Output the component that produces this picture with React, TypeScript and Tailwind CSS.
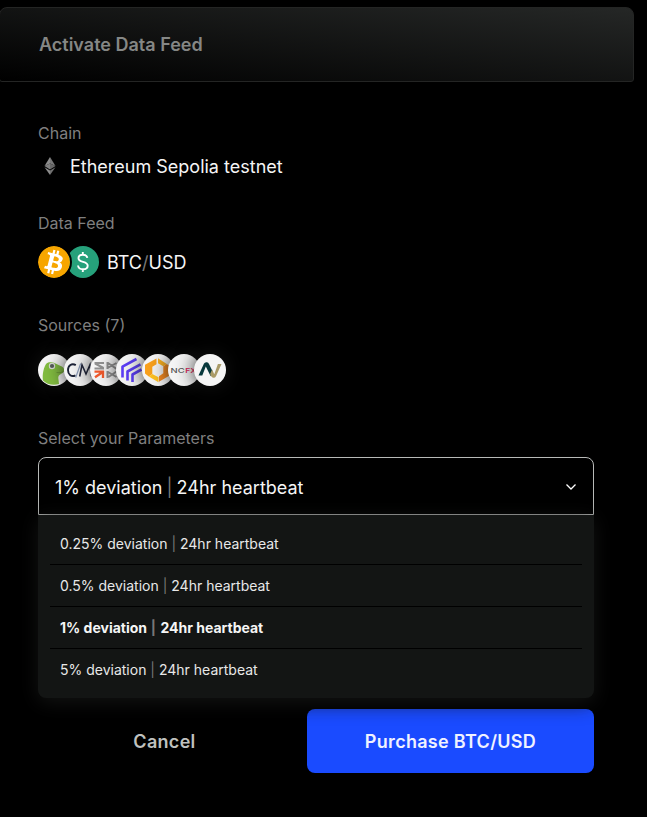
import React from "react";

const options = [
  { deviation: "0.25%", heartbeat: "24hr", selected: false },
  { deviation: "0.5%", heartbeat: "24hr", selected: false },
  { deviation: "1%", heartbeat: "24hr", selected: true },
  { deviation: "5%", heartbeat: "24hr", selected: false },
];

function Ethereum() {
  return (
    <svg className="size-6" viewBox="0 0 24 24">
      <path d="M12 3 6.5 12.1 12 9.6z" fill="#8c8c8c" />
      <path d="M12 3v6.600l5.500 2.500z" fill="#777" />
      <path d="M12 9.600 6.500 12.100 12 15.400z" fill="#808080" />
      <path d="M12 9.600v5.800l5.500-3.300z" fill="#686868" />
      <path d="M6.500 13.200 12 16.500V21z" fill="#8c8c8c" />
      <path d="M12 16.500v4.500l5.500-7.800z" fill="#707070" />
    </svg>
  );
}

function Bitcoin() {
  return (
    <svg className="relative size-8 shrink-0 rounded-full ring-2 ring-black" viewBox="0 0 32 32">
      <circle cx="16" cy="16" r="16" fill="#f7a600" />
      <path
        fill="#fff"
        transform="translate(16 16) scale(1.24) translate(-16.1 -15.9)"
        d="M23.2 14c.3-2.1-1.3-3.3-3.5-4l.7-2.900-1.700-.4-.7 2.800-1.400-.3.7-2.800-1.700-.4-.7 2.800-3.500-.9-.5 1.800s1.300.3 1.200.3c.7.2.8.6.8 1l-2 7.900c-.1.2-.3.5-.8.4l-1.200-.3-.9 2 3.300.8-.7 2.900 1.700.4.7-2.900 1.400.4-.7 2.800 1.700.4.7-2.900c3 .6 5.200.3 6.200-2.400.7-2.100 0-3.400-1.600-4.200 1.200-.3 2-1 2.200-2.600zm-3.900 5.500c-.5 2.100-4.200 1-5.300.7l.9-3.800c1.200.3 5 .9 4.400 3.100zm.6-5.500c-.5 2-3.500 1-4.500.7l.9-3.500c1 .3 4.100.7 3.600 2.800z"
      />
    </svg>
  );
}

function Dollar() {
  return (
    <svg className="-ml-[3px] size-8 shrink-0" viewBox="0 0 32 32">
      <circle cx="16" cy="16" r="16" fill="#26a17b" />
      <path
        d="M20.300 11.900c-.4-2-2.100-3.100-4.500-3.100-2.600 0-4.300 1.300-4.300 3.400 0 5 9.200 2.500 9.200 7.500 0 2.200-1.900 3.500-4.700 3.500-2.900 0-4.700-1.400-5-3.700M15.800 6v3M15.800 23v3"
        fill="none"
        stroke="#fff"
        strokeWidth="1.900"
      />
    </svg>
  );
}

function Gecko() {
  return (
    <svg className="size-8" viewBox="0 0 32 32">
      <path
        d="M5 26.500C4 20 6 12.500 8.500 9.500c1.500-1.500 3.500-1.300 5-1.200 3.500.3 5.700 2.200 8.700 3.500 2.500.9 4 2.400 4 4.400 0 2-1.800 3-4 4.300-1.800 1-2.200 2.500-1.700 5l.5 4.500C15.500 31.500 8.500 30.500 5 26.500z"
        fill="#82bc40"
      />
      <path d="M18.500 18.500q3.500.8 7-.9" fill="none" stroke="#567f29" strokeWidth=".5" />
      <circle cx="14" cy="12" r="3.200" fill="#d9dcd6" />
      <circle cx="14" cy="12" r="2.100" fill="#565c59" />
    </svg>
  );
}

function CoinMetrics() {
  return (
    <svg className="size-8" viewBox="0 0 32 32" fill="none" strokeWidth="1.900">
      <path d="M11.800 11.100C7.800 8.700 4 11.500 4 16s3.500 7.500 7.500 5.300" stroke="#1d2337" />
      <path d="m11.700 23.500 5-14" stroke="#8b9bb8" strokeWidth="1.200" />
      <path d="M15.700 22.500 18 10.800l4 9.200 4-9.200 1.500 11.700" stroke="#20263c" strokeWidth="1.600" />
    </svg>
  );
}

function Kaiko() {
  return (
    <svg className="size-8" viewBox="0 0 32 32" fill="none" strokeWidth="2">
      <path d="M4.500 9H14M4.500 14.500H14M5 9.500l8.500 4.500" stroke="#929292" />
      <path d="M17.500 8v7M26.500 9l-9 5M18 9l8 5.500h1" stroke="#929292" />
      <path d="M17.500 17v7M18 18l8.500 5M26.500 17.500l-8 5.500" stroke="#929292" />
      <path d="M4.500 17.600H14M13 17v7M12.500 18.200l-7.500 5" stroke="#f15a2c" strokeWidth="2.300" />
    </svg>
  );
}

function Chevrons() {
  return (
    <svg className="size-8" viewBox="0 0 32 32" fill="none" stroke="#5b3df5" strokeWidth="2.600" strokeLinejoin="round">
      <path d="M6.500 23.500V12.700L20.500 5M11.500 26.500v-9l13-7.200M16.500 28v-7.500l9-5" />
    </svg>
  );
}

function Hexagon() {
  return (
    <svg className="size-8" viewBox="0 0 32 32">
      <path d="M14.500 4.500v5.700l-4.200 2.600v7.200L6.800 22.500l-3.800-3v-8.800z" fill="#f9a11c" />
      <path d="m6.800 22.500 3.500-2.500 6.200 3.200v5z" fill="#ffc220" />
      <path d="M17 27.800v-5.500l4.300-3v-7l3.500-2.300 3.700 2.500v8.500z" fill="#f58a20" />
      <path d="m16 4.200 8.800 5.800-3.500 2.300-5.300-3z" fill="#fbb01f" />
    </svg>
  );
}

function Ncfx() {
  return (
    <svg className="size-8" viewBox="0 0 32 32">
      <text x="2.600" y="18.500" fontFamily="Inter, sans-serif" fontSize="6.800" fontWeight="500" textLength="14" lengthAdjust="spacingAndGlyphs" fill="#555">NC</text>
      <text x="17.200" y="18.500" fontFamily="Inter, sans-serif" fontSize="6.800" fontWeight="600" textLength="11" lengthAdjust="spacingAndGlyphs" fill="#e0265c">FX</text>
    </svg>
  );
}

function Nodes() {
  return (
    <svg className="size-8" viewBox="0 0 32 32">
      <path d="M4.500 21.500 9.900 9.700q.9-1.900 3-1.500 1.500.3 2.100 1.700l3.700 7.600-2 4.800-4.900-9.800L8.300 21.500z" fill="#08383c" />
      <path d="M27.500 10 22 22.200q-1 2-3 1.500-1.400-.3-2-1.700l-.9-1.900 2-4.700 2.200 4.900L23.900 10z" fill="#aa9b68" />
    </svg>
  );
}

const sources = [Gecko, CoinMetrics, Kaiko, Chevrons, Hexagon, Ncfx, Nodes];

function Label({ children, className }: { children: React.ReactNode; className: string }) {
  return <div className={`text-base leading-6 text-[#7f7f7f] ${className}`}>{children}</div>;
}

export default function App() {
  return (
    <div className="h-[817px] w-[647px] overflow-hidden bg-black pt-[7px] font-['Inter',sans-serif] text-[#f5f5f5]">
      <header className="-ml-px flex h-[75px] w-[635px] items-center rounded-t-lg rounded-b-[3px] border border-[#242524] bg-[linear-gradient(to_top_right,#000_0%,#252726_100%)] pl-[39px]">
        <h1 className="text-lg font-semibold text-[#858785]">Activate Data Feed</h1>
      </header>
      <main className="w-[594px] pt-[39px] pl-[38px]">
        <Label className="">Chain</Label>
        <div className="mt-[9px] flex h-6 items-center gap-2 text-lg">
          <Ethereum />
          <span className="pt-0.5">Ethereum Sepolia testnet</span>
        </div>
        <Label className="mt-[33px]">Data Feed</Label>
        <div className="mt-[11px] flex h-8 items-center text-lg">
          <Bitcoin />
          <Dollar />
          <span className="ml-2 pt-0.5">
            BTC<span className="text-[#777]">/</span>USD
          </span>
        </div>
        <Label className="mt-[35px]">Sources (7)</Label>
        <div className="mt-[17px] flex h-8">
          {sources.map((Icon, i) => (
            <div
              key={i}
              className="relative -mr-1.5 size-8 shrink-0 overflow-hidden rounded-full bg-[#f5f5f5] shadow-[0_0_20px_#151615]"
            >
              <Icon />
            </div>
          ))}
        </div>
        <Label className="mt-10">Select your Parameters</Label>
        <div className="relative mt-[7px]">
          <div className="flex h-[58px] items-center justify-between rounded-t-lg border border-[#b8bab8] pr-4 pl-4 text-lg">
            <span className="pt-[3px]">
              1% deviation <span className="-mx-px text-[#777]">|</span> 24hr heartbeat
            </span>
            <svg className="mt-0.5 size-3" viewBox="0 0 12 12" fill="none" stroke="#fff" strokeWidth="1.300">
              <path d="m1.500 3.500 4.500 4.500 4.500-4.500" />
            </svg>
          </div>
          <ul className="absolute top-[58px] left-0 z-10 h-[183px] w-full rounded-b-lg bg-[#131514] px-3 pt-2 text-sm shadow-[0_4px_20px_#131413]">
            {options.map((o) => (
              <li
                key={o.deviation}
                className={`flex h-[42px] items-center border-b border-black pl-2.5 last:border-0 ${o.selected ? "font-bold" : "text-[#e8e8e8]"}`}
              >
                <span>
                  {o.deviation} deviation{" "}
                  <span className={`text-[#777] ${o.selected ? "mr-[1.2px] ml-[0.3px]" : ""}`}>|</span> {o.heartbeat} heartbeat
                </span>
              </li>
            ))}
          </ul>
        </div>
        <div className="mt-[194px] flex h-16 justify-between text-lg font-semibold">
          <button className="w-[253px] pt-0.5 tracking-[0.3px] text-[#bfc1bf]">Cancel</button>
          <button className="w-[287px] rounded-lg bg-[#1a4bff] pt-0.5 tracking-[0.3px] text-[#f0f2ff]">Purchase BTC/USD</button>
        </div>
      </main>
    </div>
  );
}
